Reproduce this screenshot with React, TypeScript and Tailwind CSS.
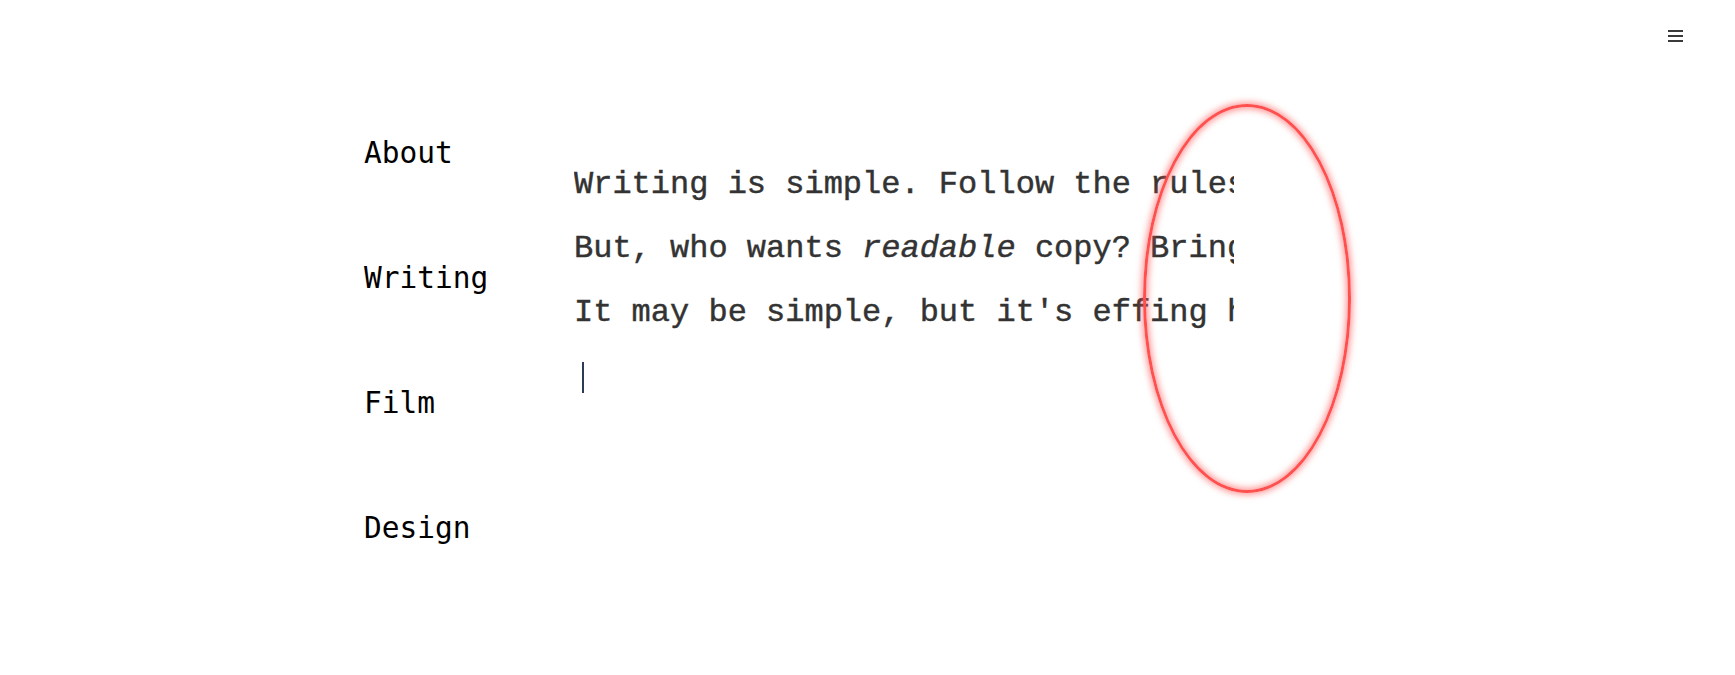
const navItems = ['About', 'Writing', 'Film', 'Design'];

function MenuIcon() {
  return (
    <div className="absolute top-[30px] right-[52px] flex flex-col gap-[3px]">
      <div className="w-[15px] h-[2px] bg-[#3a3a3a]" />
      <div className="w-[15px] h-[2px] bg-[#3a3a3a]" />
      <div className="w-[15px] h-[2px] bg-[#3a3a3a]" />
    </div>
  );
}

export default function App() {
  return (
    <div className="relative w-full h-[675px] bg-white overflow-hidden">
      <MenuIcon />

      <div className="flex pl-[364px]">
        {/* Nav */}
        <nav className="w-[210px] shrink-0 pt-[136px] flex flex-col gap-[91px] font-['DejaVu_Sans_Mono',monospace] text-[29.5px] leading-[34px] text-black">
          {navItems.map((item) => (
            <a key={item} href="#" className="block">
              {item}
            </a>
          ))}
        </nav>

        {/* Editor */}
        <div className="w-[660px] pt-[153px] overflow-hidden whitespace-nowrap font-['Liberation_Mono','Courier_New',monospace] text-[32px] leading-[64px] text-[#333333] [-webkit-text-stroke:0.45px_#333333]">
          <p>Writing is simple. Follow the rules and you'll have readable copy.</p>
          <p>
            But, who wants <em>readable</em> copy? Bring the noise.
          </p>
          <p>It may be simple, but it's effing hard.</p>
          <p className="h-[64px] flex items-center">
            <span className="ml-[8px] mt-[1px] w-[2px] h-[31px] bg-[#2b3a55]" />
          </p>
        </div>
      </div>

      {/* Red ring over the text */}
      <div className="absolute left-[1143px] top-[104px] w-[208px] h-[389px] rounded-[50%] border-[3px] border-[#ff5050] shadow-[0_0_6px_2px_rgba(255,90,90,0.6),inset_0_0_6px_2px_rgba(255,90,90,0.6)] pointer-events-none" />
    </div>
  );
}
